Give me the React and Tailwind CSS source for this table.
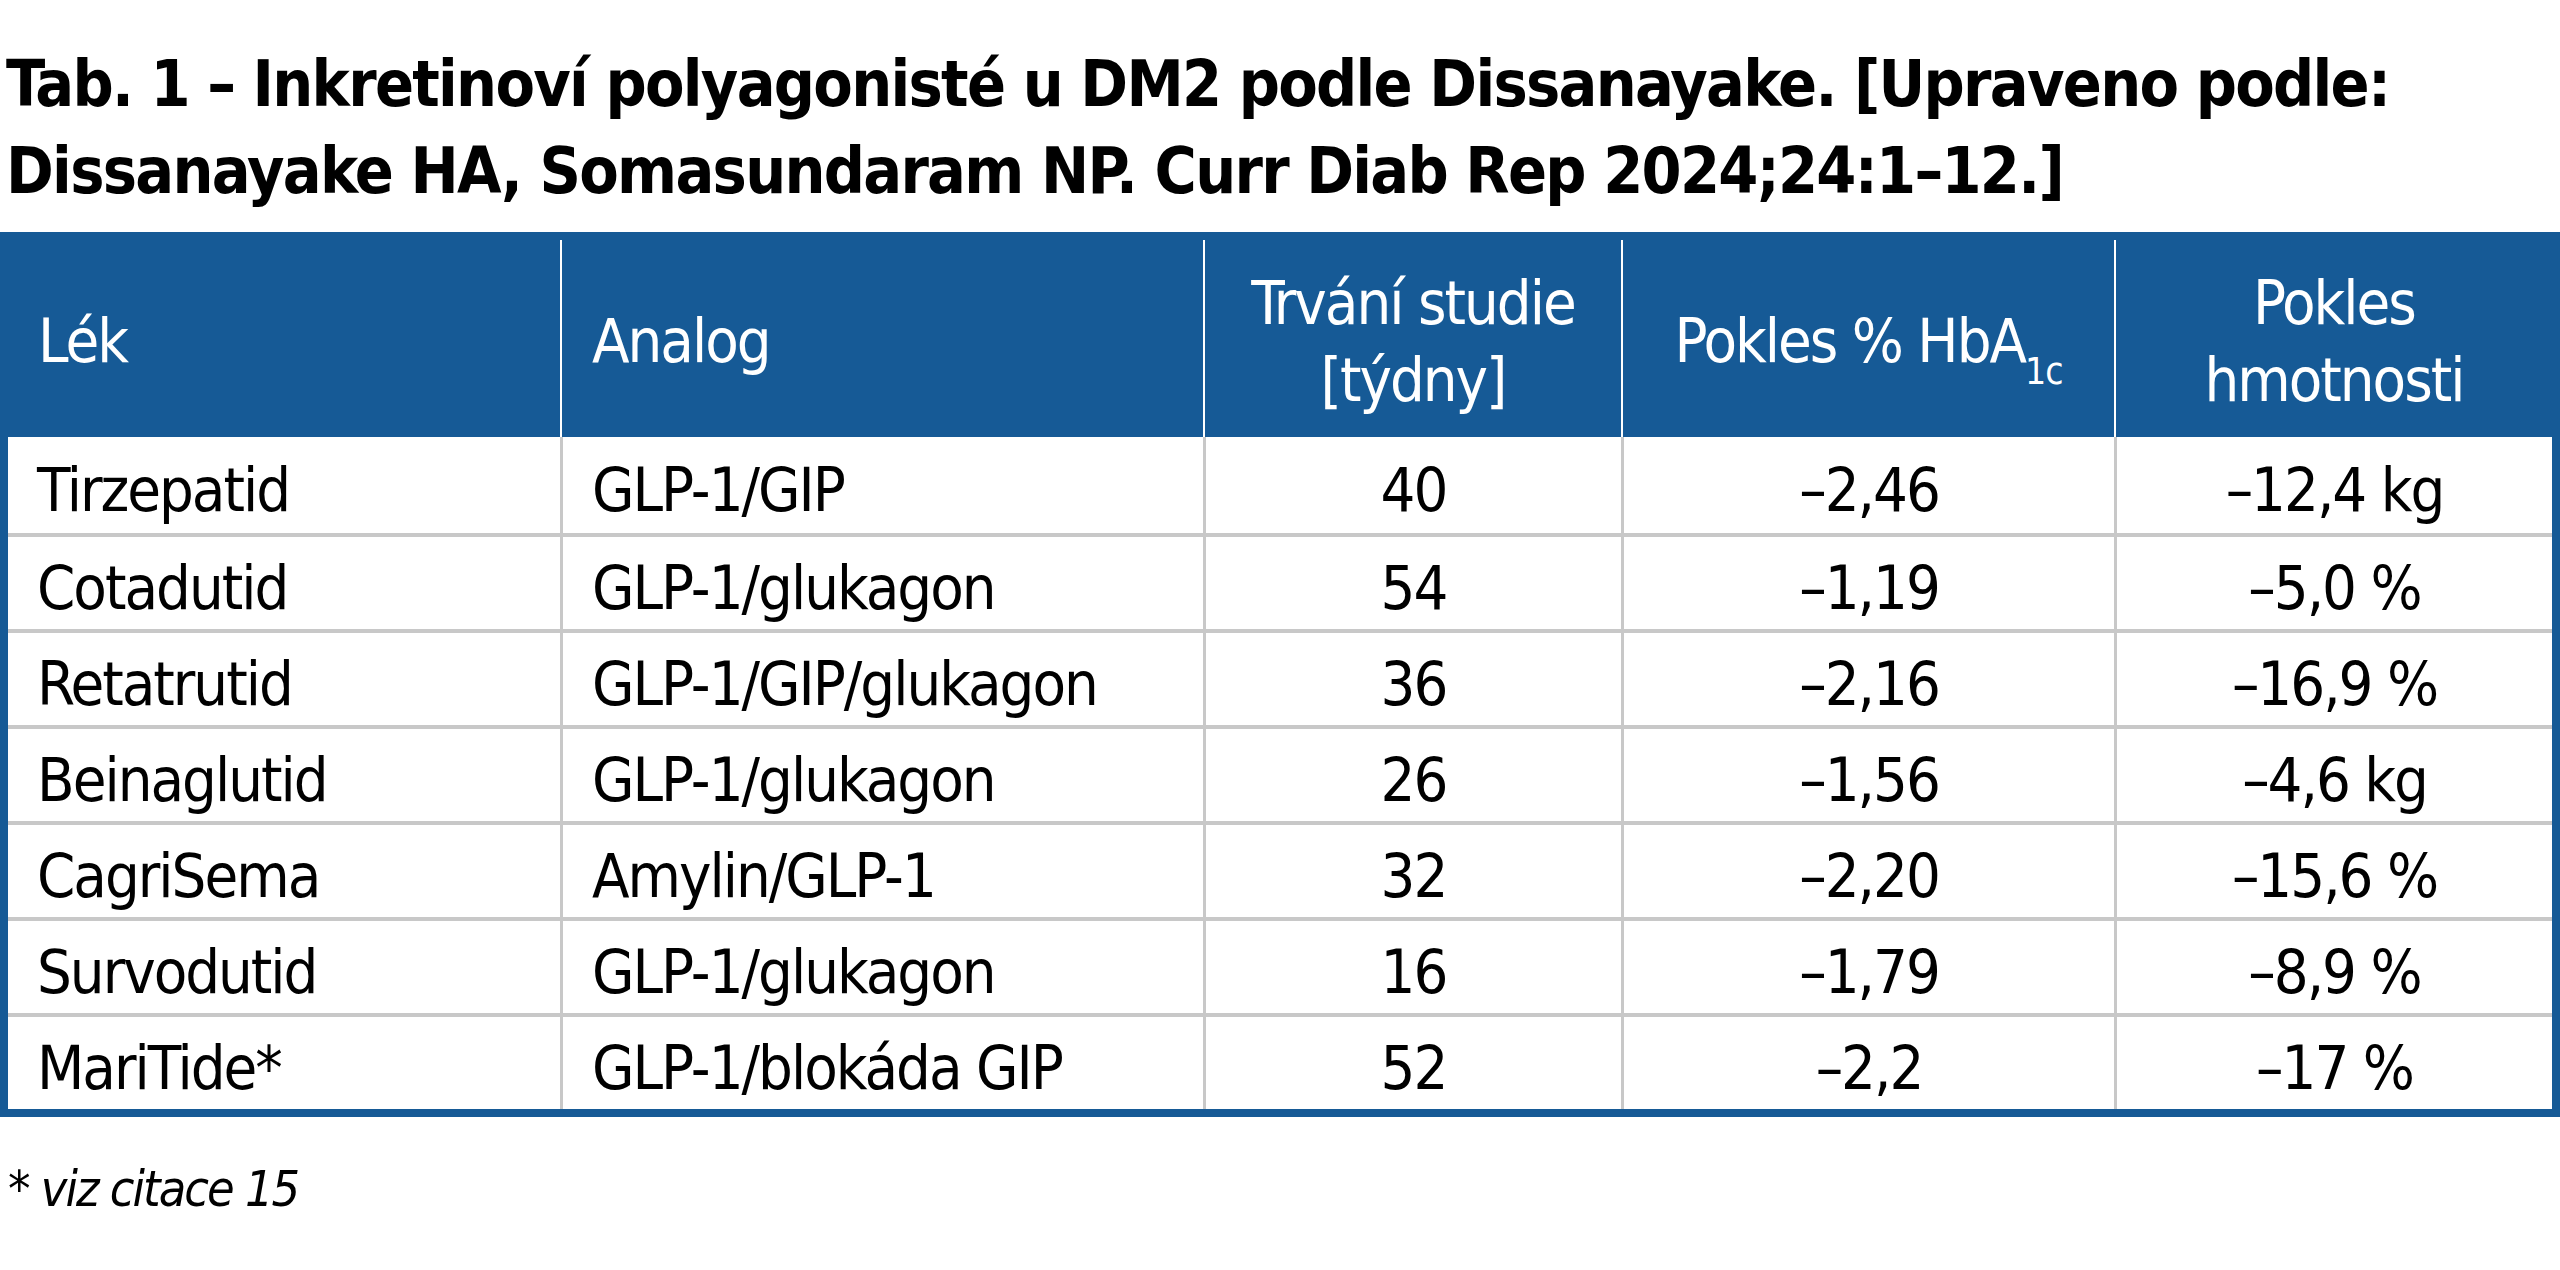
// Tab. 1 – inkretinoví polyagonisté, table figure

const ROWS = [
  ["Tirzepatid",  "GLP-1/GIP",          "40", "–2,46", "–12,4 kg"],
  ["Cotadutid",   "GLP-1/glukagon",     "54", "–1,19", "–5,0 %"],
  ["Retatrutid",  "GLP-1/GIP/glukagon", "36", "–2,16", "–16,9 %"],
  ["Beinaglutid", "GLP-1/glukagon",     "26", "–1,56", "–4,6 kg"],
  ["CagriSema",   "Amylin/GLP-1",       "32", "–2,20", "–15,6 %"],
  ["Survodutid",  "GLP-1/glukagon",     "16", "–1,79", "–8,9 %"],
  ["MariTide*",   "GLP-1/blokáda GIP",  "52", "–2,2",  "–17 %"],
]

const COLS = "grid grid-cols-[552px_643px_418px_493px_438px]"

export default function App() {
  return (
    <div className="w-[2560px] h-[1270px] bg-white text-black font-['Liberation_Sans_Narrow','DejaVu_Sans_Condensed','Liberation_Sans',sans-serif]">
      {/* Title */}
      <div className="pt-[41px] pl-[6px] text-[64px] leading-[87px] tracking-[-1.7px] font-bold whitespace-nowrap">
        <p>Tab. 1 – Inkretinoví polyagonisté u DM2 podle Dissanayake. [Upraveno podle:</p>
        <p>Dissanayake HA, Somasundaram NP. Curr Diab Rep 2024;24:1–12.]</p>
      </div>

      {/* Table */}
      <div className="mt-[17px] border-x-8 border-b-8 border-[#165a96] text-[61px] tracking-[-2px]">
        <div className={`${COLS} bg-[#165a96] pt-2 h-[205px] text-white`}>
          <HeadCell left first>Lék</HeadCell>
          <HeadCell left>Analog</HeadCell>
          <HeadCell>
            <span>Trvání studie</span>
            <span>[týdny]</span>
          </HeadCell>
          <HeadCell>
            <span>
              Pokles % HbA<sub className="text-[37px] -bottom-[22px] tracking-[-1px]">1c</sub>
            </span>
          </HeadCell>
          <HeadCell>
            <span>Pokles</span>
            <span>hmotnosti</span>
          </HeadCell>
        </div>

        {ROWS.map((r, i) => (
          <div key={r[0]}
               className={`${COLS} h-[96px] ${i > 0 ? "border-t-4 border-[#c8c8c8]" : ""}`}>
            <Cell left first>{r[0]}</Cell>
            <Cell left>{r[1]}</Cell>
            <Cell>{r[2]}</Cell>
            <Cell>{r[3]}</Cell>
            <Cell>{r[4]}</Cell>
          </div>
        ))}
      </div>

      {/* Footnote */}
      <p className="mt-[37px] pl-[8px] text-[50px] leading-[70px] tracking-[-2px] italic">* viz citace 15</p>
    </div>
  )
}

function HeadCell({ left, first, children }) {
  return (
    <div className={`flex flex-col justify-center pt-[4px] leading-[77px] whitespace-nowrap
                     ${first ? "" : "border-l-2 border-white"}
                     ${left ? "items-start pl-[30px]" : "items-center"}`}>
      {children}
    </div>
  )
}

function Cell({ left, first, children }) {
  return (
    <div className={`flex items-center pt-[10px] leading-[74px] whitespace-nowrap
                     ${first ? "" : "border-l-[3px] border-[#c8c8c8]"}
                     ${left ? "justify-start pl-[29px]" : "justify-center"}`}>
      {children}
    </div>
  )
}
